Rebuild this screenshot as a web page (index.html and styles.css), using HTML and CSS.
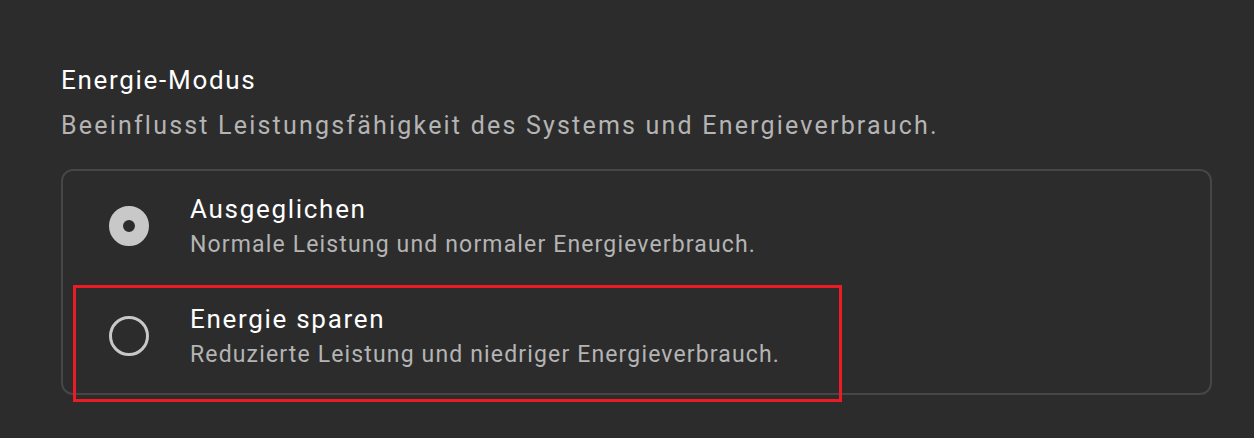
FILE: index.html
```html
<!DOCTYPE html>
<html lang="de">
<head>
  <meta charset="UTF-8" />
  <title>Energie-Modus</title>
  <link rel="stylesheet" href="styles.css">
</head>
<body>
  <section class="setting">
    <h2 class="setting-title">Energie-Modus</h2>
    <p class="setting-desc">Beeinflusst Leistungsfähigkeit des Systems und Energieverbrauch.</p>

    <div class="options">
      <!-- Option: balanced -->
      <label class="option">
        <span class="radio checked"></span>
        <span class="option-text">
          <span class="option-title">Ausgeglichen</span>
          <span class="option-sub">Normale Leistung und normaler Energieverbrauch.</span>
        </span>
      </label>

      <!-- Option: save energy -->
      <label class="option">
        <span class="radio"></span>
        <span class="option-text">
          <span class="option-title">Energie sparen</span>
          <span class="option-sub">Reduzierte Leistung und niedriger Energieverbrauch.</span>
        </span>
      </label>
    </div>

    <!-- annotation frame around the second option -->
    <div class="highlight"></div>
  </section>
</body>
</html>
```

FILE: styles.css
```css
* {
  box-sizing: border-box;
}

html, body {
  margin: 0;
  padding: 0;
  min-height: 100vh;
  background: #2c2c2c;
  font-family: Roboto, 'Liberation Sans', sans-serif;
  color: #fff;
}

.setting {
  position: relative;
  padding: 63px 42px 40px 61px;
}

.setting-title {
  margin: 0;
  font-size: 26px;
  font-weight: 400;
  line-height: 34px;
  letter-spacing: 1.7px;
  color: #ffffff;
}

.setting-desc {
  margin: 13px 0 0;
  font-size: 25px;
  line-height: 32px;
  letter-spacing: 2.2px;
  color: #b4b4b4;
}

.options {
  margin-top: 27px;
  border: 2px solid #464646;
  border-radius: 12px;
  padding: 0 0 2px;
}

.option {
  display: flex;
  align-items: center;
  height: 110px;
  padding-left: 46px;
}

.radio {
  width: 40px;
  height: 40px;
  border-radius: 50%;
  border: 3px solid #c8c8c8;
  flex-shrink: 0;
}

.radio.checked {
  border: 14px solid #c8c8c8;
  background: #2c2c2c;
}

.option-text {
  display: flex;
  flex-direction: column;
  margin-left: 41px;
}

.option-title {
  font-size: 26px;
  line-height: 34px;
  letter-spacing: 1.7px;
  color: #ffffff;
}

.option-sub {
  margin-top: 4px;
  font-size: 23px;
  line-height: 30px;
  letter-spacing: 1.15px;
  color: #b4b4b4;
}

.highlight {
  position: absolute;
  left: 73px;
  top: 285px;
  width: 769px;
  height: 117px;
  border: 3px solid #ec1c24;
  z-index: 2;
}
```
